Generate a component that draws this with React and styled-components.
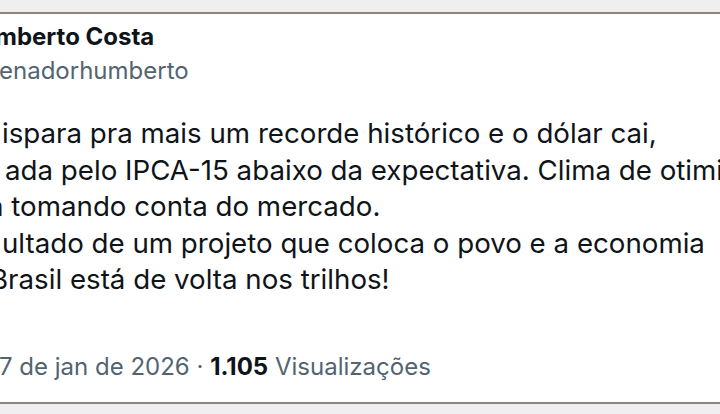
import React from 'react';
import styled, { createGlobalStyle } from 'styled-components';

const GlobalStyle = createGlobalStyle`
  html, body {
    margin: 0;
    padding: 0;
    background: #efefef;
  }
  body {
    font-family: Inter, "Noto Sans", "DejaVu Sans", sans-serif;
    color: #0f1419;
  }
`;

const Frame = styled.div`
  margin-top: 12px;
  height: 388px;
  background: #fff;
  border-top: 2px solid #8a867e;
  border-bottom: 2px solid #8a867e;
  overflow: hidden;
`;

const Header = styled.div`
  padding-top: 9px;
  display: flex;
  flex-direction: column;
  gap: 6px;
`;

const Name = styled.div`
  font-size: 24px;
  font-weight: 700;
  line-height: 28px;
  white-space: nowrap;
  margin-left: ${p => p.shift || 0}px;
`;

const Handle = styled.div`
  font-size: 24px;
  line-height: 28px;
  color: #536471;
  white-space: nowrap;
  margin-left: ${p => p.shift || 0}px;
`;

const Body = styled.div`
  margin-top: 30px;
  display: flex;
  flex-direction: column;
`;

const Line = styled.div`
  font-size: 27.7px;
  line-height: 36.5px;
  white-space: nowrap;
  margin-left: ${p => p.shift || 0}px;
`;

const Meta = styled.div`
  margin-top: 55px;
  font-size: 24px;
  line-height: 28px;
  color: #536471;
  white-space: nowrap;
  margin-left: ${p => p.shift || 0}px;

  b {
    color: #0f1419;
    font-weight: 700;
  }
`;

const lines = [
  { text: 'ispara pra mais um recorde histórico e o dólar cai,', shift: 2 },
  { text: 'ada pelo IPCA-15 abaixo da expectativa. Clima de otimismo', shift: 5 },
  { text: 'á tomando conta do mercado.', shift: -12 },
  { text: 'ultado de um projeto que coloca o povo e a economia', shift: 2 },
  { text: 'Brasil está de volta nos trilhos!', shift: -10 },
];

export default function App() {
  return (
    <>
      <GlobalStyle />
      <Frame>
        <Header>
          <Name shift={-5}>mberto Costa</Name>
          <Handle shift={-1}>enadorhumberto</Handle>
        </Header>
        <Body>
          {lines.map((l, i) => (
            <Line key={i} shift={l.shift}>{l.text}</Line>
          ))}
        </Body>
        <Meta shift={-1}>
          7 de jan de 2026 · <b>1.105</b> Visualizações
        </Meta>
      </Frame>
    </>
  );
}
